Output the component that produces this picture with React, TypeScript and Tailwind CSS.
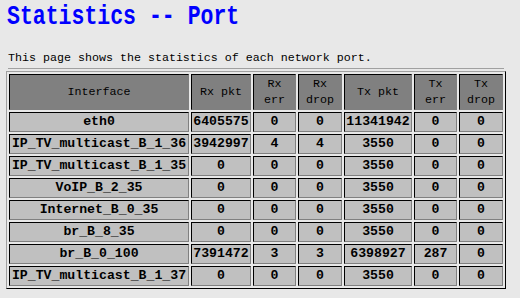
import React from "react";

type PortRow = {
  name: string;
  rxPkt: string;
  rxErr: string;
  rxDrop: string;
  txPkt: string;
  txErr: string;
  txDrop: string;
};

const rows: PortRow[] = [
  { name: "eth0", rxPkt: "6405575", rxErr: "0", rxDrop: "0", txPkt: "11341942", txErr: "0", txDrop: "0" },
  { name: "IP_TV_multicast_B_1_36", rxPkt: "3942997", rxErr: "4", rxDrop: "4", txPkt: "3550", txErr: "0", txDrop: "0" },
  { name: "IP_TV_multicast_B_1_35", rxPkt: "0", rxErr: "0", rxDrop: "0", txPkt: "3550", txErr: "0", txDrop: "0" },
  { name: "VoIP_B_2_35", rxPkt: "0", rxErr: "0", rxDrop: "0", txPkt: "3550", txErr: "0", txDrop: "0" },
  { name: "Internet_B_0_35", rxPkt: "0", rxErr: "0", rxDrop: "0", txPkt: "3550", txErr: "0", txDrop: "0" },
  { name: "br_B_8_35", rxPkt: "0", rxErr: "0", rxDrop: "0", txPkt: "3550", txErr: "0", txDrop: "0" },
  { name: "br_B_0_100", rxPkt: "7391472", rxErr: "3", rxDrop: "3", txPkt: "6398927", txErr: "287", txDrop: "0" },
  { name: "IP_TV_multicast_B_1_37", rxPkt: "0", rxErr: "0", rxDrop: "0", txPkt: "3550", txErr: "0", txDrop: "0" },
];

const th =
  "h-[36px] p-0 bg-[#808080] border border-t-black border-l-black border-r-[#808080] border-b-[#808080] font-normal text-center leading-[16px]";
const td =
  "h-[20px] p-0 bg-[#c0c0c0] border border-t-black border-l-black border-r-[#808080] border-b-[#808080] text-center font-bold text-[13.2px] leading-[18px] whitespace-nowrap overflow-hidden";

export default function App() {
  return (
    <div
      className="w-[520px] h-[298px] bg-[#e8e8e8] text-black overflow-hidden"
      style={{ fontFamily: '"Liberation Mono", "DejaVu Sans Mono", monospace' }}
    >
      {/* Title */}
      <div className="h-[27px] pl-[7px]">
        <h1 className="origin-top scale-y-[1.25] text-[21.5px] leading-[27px] font-bold text-[#0000ff]">
          Statistics -- Port
        </h1>
      </div>

      <p className="mt-[24px] pl-[8px] text-[11.67px] leading-[14px]">
        This page shows the statistics of each network port.
      </p>

      <div className="mt-[3px] ml-[8px] w-[496px] h-px bg-[#a0a0a0]"></div>

      {/* Stats table */}
      <table className="mt-[2px] ml-[6px] table-fixed border-separate border-spacing-[2px] border border-t-[#a0a0a0] border-l-[#a0a0a0] border-r-black border-b-black text-[11.67px]">
        <thead>
          <tr>
            <th className={`${th} w-[180px]`}>Interface</th>
            <th className={`${th} w-[60px]`}>Rx pkt</th>
            <th className={`${th} w-[43px]`}>
              Rx
              <br />
              err
            </th>
            <th className={`${th} w-[44px]`}>
              Rx
              <br />
              drop
            </th>
            <th className={`${th} w-[68px]`}>Tx pkt</th>
            <th className={`${th} w-[43px]`}>
              Tx
              <br />
              err
            </th>
            <th className={`${th} w-[44px]`}>
              Tx
              <br />
              drop
            </th>
          </tr>
        </thead>
        <tbody>
          {rows.map((r) => (
            <tr key={r.name}>
              <td className={td}>{r.name}</td>
              <td className={td}>{r.rxPkt}</td>
              <td className={td}>{r.rxErr}</td>
              <td className={td}>{r.rxDrop}</td>
              <td className={td}>{r.txPkt}</td>
              <td className={td}>{r.txErr}</td>
              <td className={td}>{r.txDrop}</td>
            </tr>
          ))}
        </tbody>
      </table>
    </div>
  );
}
